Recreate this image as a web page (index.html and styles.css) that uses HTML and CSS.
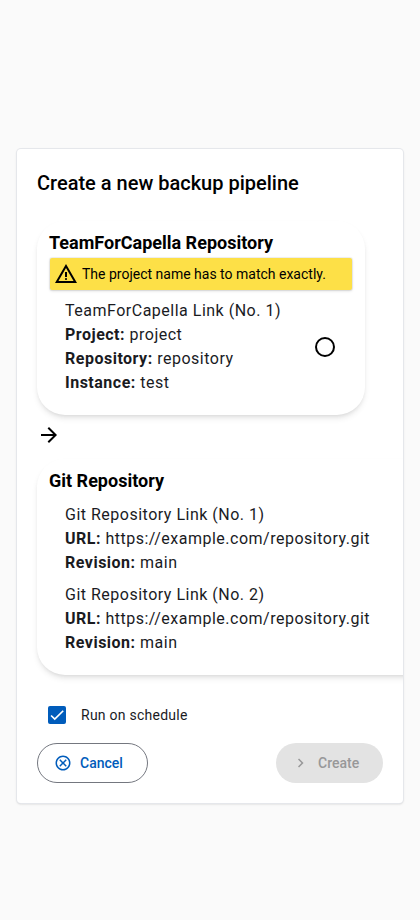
FILE: index.html
```html
<!DOCTYPE html>
<html lang="en">
<head>
<meta charset="utf-8">
<title>Create a new backup pipeline</title>
<link rel="stylesheet" href="styles.css">
</head>
<body>
<main class="dialog">
  <h2 class="title">Create a new backup pipeline</h2>
  <section class="box box-t4c">
    <h3 class="heading">TeamForCapella Repository</h3>
    <div class="warning">
      <svg class="icon" viewBox="0 -960 960 960" fill="currentColor"><path d="m40-120 440-760 440 760H40Zm138-80h604L480-720 178-200Zm302-40q17 0 28.500-11.500T520-280q0-17-11.500-28.500T480-320q-17 0-28.500 11.500T440-280q0 17 11.500 28.500T480-240Zm-40-120h80v-200h-80v200Z"/></svg>
      <span>The project name has to match exactly.</span>
    </div>
    <div class="option">
      <div>
        <div>TeamForCapella Link (No. 1)</div>
        <div><b>Project:</b> project</div>
        <div><b>Repository:</b> repository</div>
        <div><b>Instance:</b> test</div>
      </div>
      <svg class="icon" viewBox="0 0 24 24" fill="none" stroke="currentColor" stroke-width="2"><circle cx="12" cy="12" r="9"/></svg>
    </div>
  </section>
  <svg class="arrow" viewBox="0 -960 960 960" fill="currentColor"><path d="M647-440H160v-80h487L423-744l57-56 320 320-320 320-57-56 224-224Z"/></svg>
  <section class="box box-git">
    <h3 class="heading">Git Repository</h3>
    <div class="option">
      <div>
        <div>Git Repository Link (No. 1)</div>
        <div><b>URL:</b> https://example.com/repository.git</div>
        <div><b>Revision:</b> main</div>
      </div>
    </div>
    <div class="option">
      <div>
        <div>Git Repository Link (No. 2)</div>
        <div><b>URL:</b> https://example.com/repository.git</div>
        <div><b>Revision:</b> main</div>
      </div>
    </div>
  </section>
  <div class="schedule">
    <span class="check"><svg viewBox="0 0 24 24" fill="none" stroke="#fff" stroke-width="2.200"><path d="M4.100 12.700 9 17.600 20.300 6.300"/></svg></span>
    <span>Run on schedule</span>
  </div>
  <div class="actions">
    <button class="btn cancel"><svg viewBox="0 -960 960 960" fill="currentColor"><path d="m336-280 144-144 144 144 56-56-144-144 144-144-56-56-144 144-144-144-56 56 144 144-144 144 56 56ZM480-80q-83 0-156-31.500T197-197q-54-54-85.500-127T80-480q0-83 31.500-156T197-763q54-54 127-85.500T480-880q83 0 156 31.500T763-763q54 54 85.500 127T880-480q0 83-31.500 156T763-197q-54 54-127 85.500T480-80Zm0-80q134 0 227-93t93-227q0-134-93-227t-227-93q-134 0-227 93t-93 227q0 134 93 227t227 93Z"/></svg>Cancel</button>
    <button class="btn create" disabled><svg viewBox="0 -960 960 960" fill="currentColor"><path d="M504-480 320-664l56-56 240 240-240 240-56-56 184-184Z"/></svg>Create</button>
  </div>
</main>
</body>
</html>
```
FILE: styles.css
```css
* { box-sizing: border-box; }
body {
  margin: 0;
  padding: 149px 17px 0;
  height: 920px;
  overflow: hidden;
  background: #fafafa;
  color: #1a1b1f;
  font: 16px/24px Roboto, sans-serif;
  letter-spacing: 0.5px;
}
.dialog {
  width: 386px;
  height: 654px;
  padding: 20px;
  overflow: hidden;
  background: #fff;
  border-radius: 4px;
  box-shadow: 0 0 0 1px #e5e7eb, 0 1px 3px rgba(0, 0, 0, .1), 0 1px 2px rgba(0, 0, 0, .1);
}
.title {
  margin: 0;
  font-size: 20px;
  line-height: 28px;
  font-weight: 500;
  letter-spacing: 0;
  color: #000;
}
.box {
  border-radius: 28px;
  padding: 12px;
  box-shadow: 0 4px 6px -1px rgba(0, 0, 0, .1), 0 2px 4px -2px rgba(0, 0, 0, .1);
}
.box-t4c { width: 328px; height: 194px; margin-top: 24px; }
.box-git { width: 394px; height: 216px; margin-top: 12px; }
.heading {
  margin: 0;
  font-size: 18px;
  line-height: 20px;
  font-weight: 700;
  letter-spacing: 0;
  color: #000;
}
.warning {
  display: flex;
  align-items: center;
  gap: 4px;
  height: 32px;
  margin: 5px 1px 9px;
  padding: 0 4px;
  border-radius: 2px;
  background: #fde047;
  box-shadow: 0 0 0 1px rgba(0, 0, 0, .05), 0 1px 3px rgba(0, 0, 0, .15);
  color: #000;
  font-size: 14px;
  letter-spacing: 0;
}
.icon { width: 24px; height: 24px; flex: none; color: #000; }
.option { display: flex; align-items: center; justify-content: space-between; padding: 0 16px 8px; white-space: nowrap; }
.box-git .heading { margin-bottom: 12px; }
.arrow { display: block; width: 24px; height: 24px; margin-top: 8px; color: #000; }
.schedule { display: flex; align-items: center; height: 40px; margin-top: 20px; padding-left: 11px; gap: 15px; font-size: 14px; letter-spacing: .25px; }
.check { width: 18px; height: 18px; border-radius: 2px; background: #005cbb; display: flex; }
.check svg { width: 18px; height: 18px; }
.actions { display: flex; justify-content: space-between; margin-top: 8px; width: 346px; }
.btn {
  display: flex;
  align-items: center;
  gap: 8px;
  height: 40px;
  padding: 0 0 0 16px;
  border-radius: 20px;
  border: 1px solid #74777f;
  background: #fff;
  color: #005cbb;
  font: 500 14px/20px Roboto, sans-serif;
  letter-spacing: 0;
}
.btn svg { width: 18px; height: 18px; }
.cancel { width: 111px; }
.create { width: 107px; border: 0; background: #e3e3e3; color: #989899; }
```
